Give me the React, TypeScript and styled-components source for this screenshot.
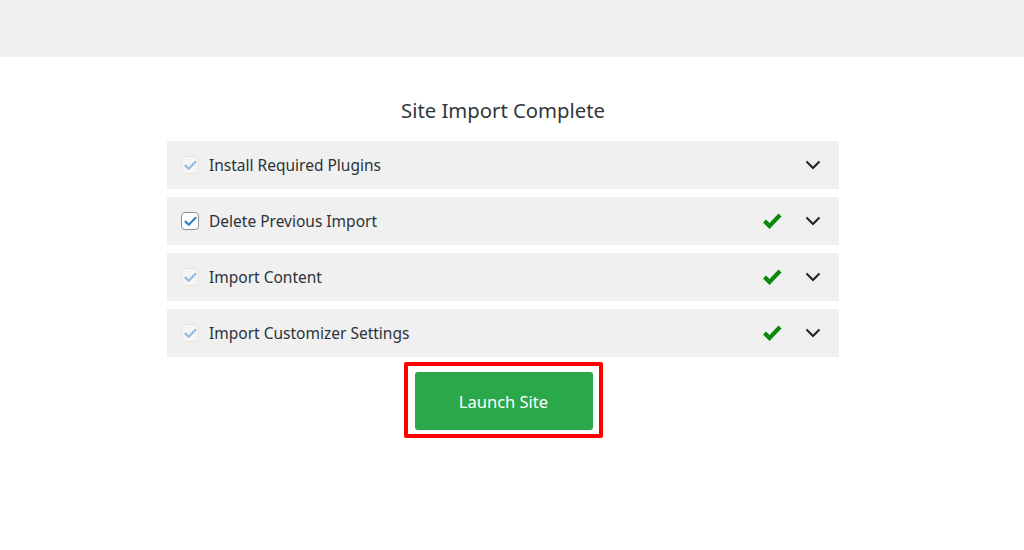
import React from "react";
import styled, { createGlobalStyle } from "styled-components";

const GlobalStyle = createGlobalStyle`
  html, body {
    margin: 0;
    padding: 0;
    background: #ffffff;
    font-family: "Noto Sans", "Open Sans", sans-serif;
  }
`;

const Page = styled.div`
  width: 1006px;
  min-height: 550px;
`;

const TopBar = styled.div`
  width: 1024px;
  height: 57px;
  background: #f0f0f0;
`;

const Content = styled.div`
  display: flex;
  flex-direction: column;
  align-items: center;
  padding-top: 38px;
`;

const Title = styled.h2`
  margin: 0 0 16px;
  font-size: 20.3px;
  font-weight: 400;
  line-height: 30px;
  color: #32373c;
`;

const List = styled.div`
  width: 672px;
  display: flex;
  flex-direction: column;
  gap: 8px;
`;

const Row = styled.div`
  height: 48px;
  background: #f0f0f0;
  display: flex;
  align-items: center;
  padding: 0 17px 0 14px;
  box-sizing: border-box;
`;

const Box = styled.span<{ $disabled?: boolean }>`
  width: 18px;
  height: 18px;
  box-sizing: border-box;
  border-radius: 4px;
  border: 1px solid ${(p) => (p.$disabled ? "#e4e4e4" : "#8c8f94")};
  background: ${(p) => (p.$disabled ? "#f5f5f5" : "#ffffff")};
  display: flex;
  align-items: center;
  justify-content: center;
  margin-right: 10px;
  flex-shrink: 0;
`;

const Label = styled.span`
  flex: 1;
  font-size: 15.5px;
  color: #2c3338;
`;

const Done = styled.span`
  width: 20px;
  display: flex;
  justify-content: center;
  margin-right: 22px;
`;

const Chevron = styled.span`
  width: 18px;
  display: flex;
  justify-content: center;
`;

const Highlight = styled.div`
  margin-top: 5px;
  border: 4px solid #ff0000;
  border-radius: 2px;
  padding: 6px 6px 4px 7px;
`;

const LaunchButton = styled.button`
  width: 178px;
  height: 58px;
  border: none;
  border-radius: 3px;
  background: #2aa84a;
  color: #ffffff;
  font-family: "Noto Sans", "Open Sans", sans-serif;
  font-size: 16.5px;
  cursor: pointer;
  display: block;
`;

const Tick = ({ color }: { color: string }) => (
  <svg width="13" height="11" viewBox="0 0 13 11">
    <path d="M1.5 5.6 L4.8 8.8 L11.5 1.8" fill="none" stroke={color} strokeWidth="2.2" strokeLinecap="round" strokeLinejoin="round" />
  </svg>
);

const GreenCheck = () => (
  <svg width="20" height="18" viewBox="0 0 20 18">
    <path d="M1 10.5 L4 7.5 L7.5 11 L16.5 1.5 L19.5 4.5 L7.5 17 Z" fill="#0a8a0a" />
  </svg>
);

const Down = () => (
  <svg width="16" height="10" viewBox="0 0 16 10">
    <polyline points="1.5,1.5 8,8 14.5,1.5" fill="none" stroke="#1d2327" strokeWidth="2" />
  </svg>
);

const steps = [
  { label: "Install Required Plugins", disabled: true, done: false },
  { label: "Delete Previous Import", disabled: false, done: true },
  { label: "Import Content", disabled: true, done: true },
  { label: "Import Customizer Settings", disabled: true, done: true },
];

export default function App() {
  return (
    <>
      <GlobalStyle />
      <Page>
        <TopBar />
        <Content>
          <Title>Site Import Complete</Title>
          <List>
            {steps.map((s) => (
              <Row key={s.label}>
                <Box $disabled={s.disabled}>
                  <Tick color={s.disabled ? "#8fbbe3" : "#3582c4"} />
                </Box>
                <Label>{s.label}</Label>
                <Done>{s.done && <GreenCheck />}</Done>
                <Chevron>
                  <Down />
                </Chevron>
              </Row>
            ))}
          </List>
          <Highlight>
            <LaunchButton>Launch Site</LaunchButton>
          </Highlight>
        </Content>
      </Page>
    </>
  );
}
